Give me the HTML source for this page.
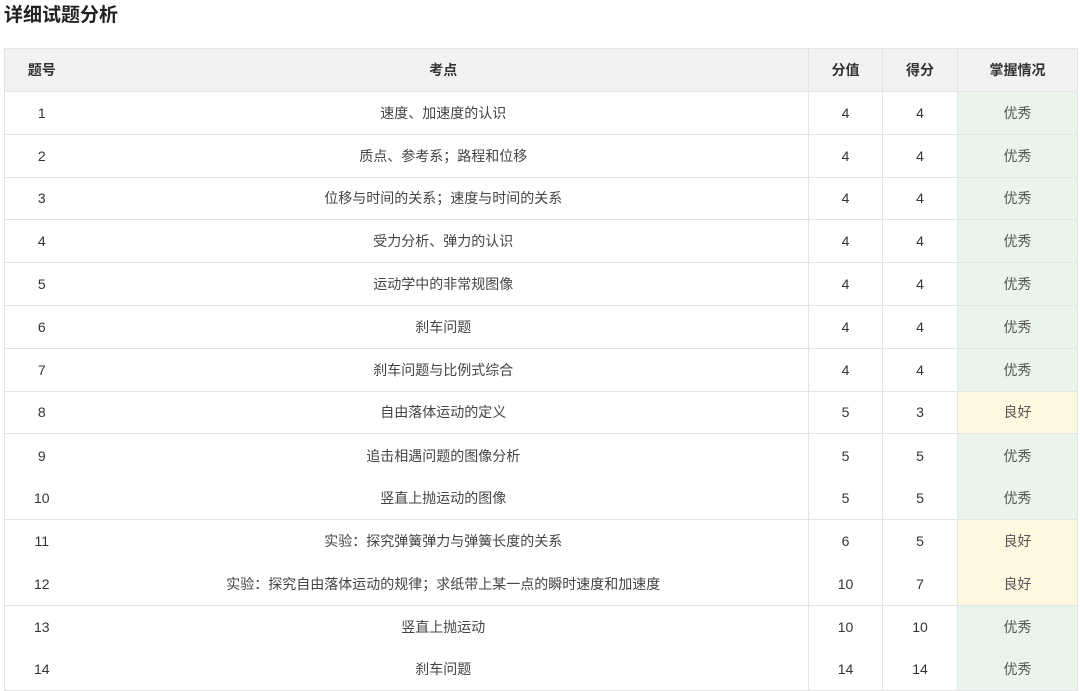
<!DOCTYPE html>
<html><head><meta charset="utf-8"><style>
body{margin:0;background:#fff;width:1080px;height:682px;overflow:hidden;font-family:"Liberation Sans","Noto Sans CJK SC",sans-serif;color:#333;position:relative}
h1{position:absolute;left:4px;top:2px;margin:0;font-size:19px;font-weight:bold;color:#222;line-height:28px}
table{position:absolute;left:4px;top:48px;border-collapse:collapse;width:1073px;table-layout:fixed;font-size:14px}
td,th{text-align:center;padding:0;height:41.8px;border-right:1px solid #e4e4e4}
th{background:#f2f2f2;font-weight:bold;font-size:14px;color:#333;height:42px;border-top:1px solid #e4e4e4}
td:first-child,th:first-child{border-right:none}
tr{border-bottom:1px solid #e4e4e4}
tr.nb{border-bottom:none}
tr.nb td{height:42.8px}
table{border-left:1px solid #e4e4e4}
td.g{background:#e9f5ea;color:#555}
td.y{background:#fff8e1;color:#555}
td.c{color:#444;font-size:14px}
</style></head><body>
<h1>详细试题分析</h1>
<table>
<colgroup><col style="width:74px"><col style="width:730px"><col style="width:74px"><col style="width:75px"><col style="width:120px"></colgroup>
<tr><th>题号</th><th>考点</th><th>分值</th><th>得分</th><th>掌握情况</th></tr>
<tr><td>1</td><td class="c">速度、加速度的认识</td><td>4</td><td>4</td><td class="g">优秀</td></tr>
<tr><td>2</td><td class="c">质点、参考系；路程和位移</td><td>4</td><td>4</td><td class="g">优秀</td></tr>
<tr><td>3</td><td class="c">位移与时间的关系；速度与时间的关系</td><td>4</td><td>4</td><td class="g">优秀</td></tr>
<tr><td>4</td><td class="c">受力分析、弹力的认识</td><td>4</td><td>4</td><td class="g">优秀</td></tr>
<tr><td>5</td><td class="c">运动学中的非常规图像</td><td>4</td><td>4</td><td class="g">优秀</td></tr>
<tr><td>6</td><td class="c">刹车问题</td><td>4</td><td>4</td><td class="g">优秀</td></tr>
<tr><td>7</td><td class="c">刹车问题与比例式综合</td><td>4</td><td>4</td><td class="g">优秀</td></tr>
<tr><td>8</td><td class="c">自由落体运动的定义</td><td>5</td><td>3</td><td class="y">良好</td></tr>
<tr class="nb"><td>9</td><td class="c">追击相遇问题的图像分析</td><td>5</td><td>5</td><td class="g">优秀</td></tr>
<tr><td>10</td><td class="c">竖直上抛运动的图像</td><td>5</td><td>5</td><td class="g">优秀</td></tr>
<tr class="nb"><td>11</td><td class="c">实验：探究弹簧弹力与弹簧长度的关系</td><td>6</td><td>5</td><td class="y">良好</td></tr>
<tr><td>12</td><td class="c">实验：探究自由落体运动的规律；求纸带上某一点的瞬时速度和加速度</td><td>10</td><td>7</td><td class="y">良好</td></tr>
<tr class="nb"><td>13</td><td class="c">竖直上抛运动</td><td>10</td><td>10</td><td class="g">优秀</td></tr>
<tr><td>14</td><td class="c">刹车问题</td><td>14</td><td>14</td><td class="g">优秀</td></tr>
</table>
</body></html>
